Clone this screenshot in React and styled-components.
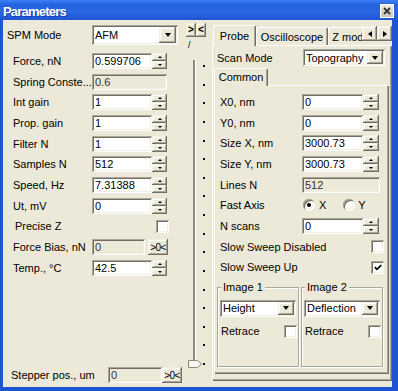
import React from "react";
import styled, { createGlobalStyle, css } from "styled-components";

const FACE = "#ECE9D8";
const LIGHT = "#F1EFE2";
const SHADOW = "#ACA899";
const DARK = "#716F64";
const BLUE = "#1D55D4";

const GlobalStyle = createGlobalStyle`
  html, body { margin: 0; padding: 0; background: ${FACE}; }
  body { font-family: "Liberation Sans", Arial, sans-serif; font-size: 11px; color: #000; }
  *, *::before, *::after { box-sizing: border-box; }
`;

const raised = css`
  background: ${FACE};
  box-shadow: inset -1px -1px 0 ${DARK}, inset 1px 1px 0 ${LIGHT},
    inset -2px -2px 0 ${SHADOW}, inset 2px 2px 0 #fff;
`;
const sunken = css`
  box-shadow: inset 1px 1px 0 ${SHADOW}, inset -1px -1px 0 #fff,
    inset 2px 2px 0 ${DARK}, inset -2px -2px 0 ${LIGHT};
`;

const Window = styled.div`
  width: 398px;
  height: 391px;
  display: flex;
  flex-direction: column;
  background: ${FACE};
  overflow: hidden;
`;
const TitleBar = styled.div`
  height: 20px;
  flex: none;
  display: flex;
  align-items: center;
  justify-content: space-between;
  padding: 0 4px 0 3px;
  background: linear-gradient(180deg, #3d80f2 0%, #2462e0 25%, #2a66e2 60%, #1d55d4 100%);
`;
const Title = styled.span`
  color: #fff;
  font-weight: bold;
  font-size: 13px;
  letter-spacing: -0.8px;
  padding-top: 2px;
  text-shadow: 1px 1px 0 rgba(10, 30, 110, 0.55);
`;
const CloseButton = styled.div`
  width: 14px;
  height: 14px;
  margin-top: 2px;
  margin-right: 0;
  border: 1px solid #fff;
  background: linear-gradient(#eceae4, #c8c5bc);
  display: flex;
  align-items: center;
  justify-content: center;
`;
const Frame = styled.div`
  flex: 1;
  min-height: 0;
  display: flex;
  border-style: solid;
  border-color: ${BLUE};
  border-width: 0 6px 4px 3px;
`;

/* ---------- generic controls ---------- */
const Row = styled.div`
  display: flex;
  align-items: center;
  flex: none;
  height: ${(p) => p.$h ?? 20.7}px;
  margin-top: ${(p) => p.$mt ?? 0}px;
`;
const LabelCell = styled.div`
  width: ${(p) => p.$w}px;
  padding-left: ${(p) => p.$indent}px;
  flex: none;
  white-space: nowrap;
  overflow: hidden;
`;
const TextField = styled.div`
  width: ${(p) => p.$w}px;
  height: ${(p) => p.$h ?? 16}px;
  flex: none;
  display: flex;
  align-items: center;
  padding: 0 3px;
  white-space: nowrap;
  overflow: hidden;
  color: ${(p) => (p.$readOnly ? "#333" : "#000")};
  ${sunken};
  background: ${(p) => (p.$readOnly ? FACE : "#fff")};
`;
const Spin = styled.div`
  width: ${(p) => p.$w ?? 15}px;
  height: 16px;
  flex: none;
  display: flex;
  flex-direction: column;
`;
const SpinBtn = styled.div`
  flex: 1;
  display: flex;
  align-items: center;
  justify-content: center;
  ${raised};
`;
const Arrow = styled.span`
  width: 0;
  height: 0;
  border-left: 2px solid transparent;
  border-right: 2px solid transparent;
  ${(p) => (p.$dir === "up" ? "border-bottom: 2px solid #000;" : "border-top: 2px solid #000;")}
`;
const Combo = styled.div`
  width: ${(p) => p.$w}px;
  height: ${(p) => p.$h}px;
  flex: none;
  display: flex;
  align-items: center;
  padding: 2px;
  ${sunken};
  background: #fff;
`;
const ComboText = styled.span`
  flex: 1;
  padding-left: 1px;
  white-space: nowrap;
  overflow: hidden;
`;
const DropBtn = styled.div`
  width: ${(p) => p.$w ?? 16}px;
  align-self: stretch;
  display: flex;
  align-items: center;
  justify-content: center;
  ${raised};
`;
const DownTri = styled.span`
  width: 0;
  height: 0;
  border-left: 3.5px solid transparent;
  border-right: 3.5px solid transparent;
  border-top: 4px solid #000;
`;
const CheckBox = styled.div`
  width: 13px;
  height: 13px;
  flex: none;
  display: flex;
  align-items: center;
  justify-content: center;
  margin-left: ${(p) => p.$ml ?? 0}px;
  ${sunken};
  background: #fff;
`;
const SmallButton = styled.div`
  width: 20px;
  height: 16px;
  flex: none;
  display: flex;
  align-items: center;
  justify-content: center;
  font-size: 10px;
  letter-spacing: -0.6px;
  margin-left: ${(p) => p.$ml ?? 0}px;
  ${raised};
`;
const Radio = styled.div`
  width: 12px;
  height: 12px;
  flex: none;
  border-radius: 50%;
  display: flex;
  align-items: center;
  justify-content: center;
  margin-left: ${(p) => p.$ml ?? 0}px;
  background: #fff;
  box-shadow: inset 1px 1px 0 ${SHADOW}, inset -1px -1px 0 #fff,
    inset 2px 2px 0 ${DARK}, inset -2px -2px 0 ${LIGHT};
`;
const RadioDot = styled.span`
  width: 4px;
  height: 4px;
  border-radius: 50%;
  background: #000;
`;
const RadioLabel = styled.span`
  margin-left: ${(p) => p.$ml}px;
`;
const Spacer = styled.div`
  flex: 1;
`;

/* ---------- left panel ---------- */
const LeftPanel = styled.div`
  width: 183px;
  flex: none;
  display: flex;
  flex-direction: column;
  padding: 5px 0 4px;
`;

/* ---------- middle splitter / trackbar ---------- */
const Middle = styled.div`
  width: 26px;
  flex: none;
  display: flex;
  flex-direction: column;
  padding-top: 3px;
`;
const SplitButtons = styled.div`
  display: flex;
  height: 14px;
`;
const SplitBtn = styled.div`
  width: 10px;
  height: 14px;
  display: flex;
  align-items: center;
  justify-content: center;
  font-size: 10px;
  font-weight: bold;
  line-height: 1;
  ${raised};
`;
const Slash = styled.div`
  height: 10px;
  margin-top: 3px;
  padding-left: 2px;
  font-size: 9px;
  line-height: 10px;
`;
const Track = styled.div`
  position: relative;
  display: flex;
  height: 311px;
  margin-top: 8px;
`;
const Groove = styled.div`
  width: 3px;
  flex: none;
  margin: 2px 0 7px 7px;
  border-left: 2px solid #8b887c;
  border-right: 1px solid #fff;
`;
const TickCol = styled.div`
  width: 2px;
  flex: none;
  margin-left: 7px;
  padding: 7px 0 4px;
  display: flex;
  flex-direction: column;
  justify-content: space-between;
`;
const Tick = styled.div`
  width: 2px;
  height: 2px;
  flex: none;
  background: #111;
`;
const Thumb = styled.svg`
  position: absolute;
  left: 2px;
  top: 302px;
`;

/* ---------- tabs ---------- */
const TabControl = styled.div`
  display: flex;
  flex-direction: column;
  width: ${(p) => p.$w};
  min-width: 0;
  flex: ${(p) => p.$flex ?? "none"};
  margin-bottom: ${(p) => p.$mb ?? 0}px;
`;
const TabStrip = styled.div`
  height: ${(p) => p.$h}px;
  flex: none;
  display: flex;
  align-items: flex-end;
`;
const TabsScroller = styled.div`
  flex: 1;
  min-width: 0;
  display: flex;
  align-items: flex-end;
  align-self: stretch;
  overflow-x: clip;
  overflow-y: visible;
  padding-left: ${(p) => p.$pl ?? 0}px;
`;
const Tab = styled.div`
  flex: none;
  width: ${(p) => p.$w}px;
  height: ${(p) => p.$h}px;
  margin-bottom: ${(p) => (p.$active ? -1 : 0)}px;
  position: relative;
  z-index: ${(p) => (p.$active ? 1 : 0)};
  background: ${FACE};
  border-top: 1px solid #fff;
  border-left: 1px solid #fff;
  border-right: 1px solid ${DARK};
  box-shadow: inset -1px 0 0 ${SHADOW};
  border-top-left-radius: 2px;
  border-top-right-radius: 2px;
  display: flex;
  align-items: center;
  justify-content: center;
  padding-bottom: ${(p) => (p.$active ? 1 : 0)}px;
  white-space: nowrap;
  overflow: hidden;
`;
const ScrollArrows = styled.div`
  display: flex;
  flex: none;
  align-self: flex-start;
  margin-top: 6px;
`;
const ScrollBtn = styled.div`
  width: 15px;
  height: 15px;
  display: flex;
  align-items: center;
  justify-content: center;
  ${raised};
`;
const SideTri = styled.span`
  width: 0;
  height: 0;
  border-top: 3.5px solid transparent;
  border-bottom: 3.5px solid transparent;
  ${(p) => (p.$dir === "left" ? "border-right: 4px solid #000;" : "border-left: 4px solid #000;")}
`;
const TabPanel = styled.div`
  flex: 1;
  display: flex;
  flex-direction: column;
  background: ${FACE};
  padding: ${(p) => p.$pad};
  box-shadow: inset 1px 1px 0 #fff, inset -1px -1px 0 ${DARK}, inset -2px -2px 0 ${SHADOW};
`;

/* ---------- groups ---------- */
const GroupsRow = styled.div`
  display: flex;
  gap: 2px;
  margin-top: 3px;
  padding-left: 3px;
`;
const Group = styled.div`
  position: relative;
  width: 82px;
  height: 86px;
  padding-top: 6px;
`;
const GroupCaption = styled.span`
  position: absolute;
  top: 0;
  left: 4px;
  padding: 0 2px;
  line-height: 12px;
  background: ${FACE};
`;
const GroupFrame = styled.div`
  height: 80px;
  display: flex;
  flex-direction: column;
  padding: 12px 1px 0 2px;
  border: 1px solid ${SHADOW};
  box-shadow: inset 1px 1px 0 #fff, 1px 1px 0 #fff;
`;
const GroupRow = styled.div`
  display: flex;
  align-items: center;
  height: 13px;
  margin-top: 8px;
  padding-left: 1px;
`;

/* ---------- data ---------- */
const leftRows = [
  { label: "Force, nN", kind: "spin", value: "0.599706" },
  { label: "Spring Conste...", kind: "ro", value: "0.6" },
  { label: "Int gain", kind: "spin", value: "1" },
  { label: "Prop. gain", kind: "spin", value: "1" },
  { label: "Filter N", kind: "spin", value: "1" },
  { label: "Samples N", kind: "spin", value: "512" },
  { label: "Speed, Hz", kind: "spin", value: "7.31388" },
  { label: "Ut, mV", kind: "spin", value: "0" },
  { label: "Precise Z", kind: "check", indent: 12 },
  { label: "Force Bias, nN", kind: "bias", value: "0" },
  { label: "Temp., \u00B0C", kind: "spin", value: "42.5" },
];

const SpinField = ({ value, w, sw }) => (
  <>
    <TextField $w={w}>{value}</TextField>
    <Spin $w={sw}>
      <SpinBtn>
        <Arrow $dir="up" />
      </SpinBtn>
      <SpinBtn>
        <Arrow $dir="down" />
      </SpinBtn>
    </Spin>
  </>
);

const ComboBox = ({ w, h, text, bw }) => (
  <Combo $w={w} $h={h}>
    <ComboText>{text}</ComboText>
    <DropBtn $w={bw}>
      <DownTri />
    </DropBtn>
  </Combo>
);

const Check = () => (
  <svg width="8" height="7" viewBox="0 0 8 7">
    <polyline points="0.8,3.2 3,5.4 7.2,1.2" fill="none" stroke="#000" strokeWidth="1.7" />
  </svg>
);

const ImageGroup = ({ caption, value }) => (
  <Group>
    <GroupCaption>{caption}</GroupCaption>
    <GroupFrame>
      <ComboBox w={76} h={17} text={value} bw={16} />
      <GroupRow>
        <span>Retrace</span>
        <Spacer />
        <CheckBox />
      </GroupRow>
    </GroupFrame>
  </Group>
);

export default function App() {
  const ticks = Array.from({ length: 17 });
  return (
    <>
      <GlobalStyle />
      <Window>
        <TitleBar>
          <Title>Parameters</Title>
          <CloseButton>
            <svg width="8" height="8" viewBox="0 0 8 8">
              <path d="M1 1 L7 7 M7 1 L1 7" stroke="#333" strokeWidth="1.8" />
            </svg>
          </CloseButton>
        </TitleBar>
        <Frame>
          <LeftPanel>
            <Row $h={20}>
              <LabelCell $w={89} $indent={4}>
                SPM Mode
              </LabelCell>
              <ComboBox w={86} h={20} text="AFM" bw={17} />
            </Row>
            {leftRows.map((r, i) => (
              <Row key={r.label} $mt={i === 0 ? 5.6 : 0}>
                <LabelCell $w={89} $indent={r.indent ?? 10}>
                  {r.label}
                </LabelCell>
                {r.kind === "spin" && <SpinField value={r.value} w={60} sw={15} />}
                {r.kind === "ro" && (
                  <TextField $w={75} $readOnly>
                    {r.value}
                  </TextField>
                )}
                {r.kind === "check" && <CheckBox $ml={64} />}
                {r.kind === "bias" && (
                  <>
                    <TextField $w={53} $readOnly>
                      {r.value}
                    </TextField>
                    <SmallButton $ml={3}>&gt;0&lt;</SmallButton>
                  </>
                )}
              </Row>
            ))}
            <Spacer />
            <Row $h={16}>
              <LabelCell $w={105} $indent={8}>
                Stepper pos., um
              </LabelCell>
              <TextField $w={54} $readOnly>
                0
              </TextField>
              <SmallButton>&gt;0&lt;</SmallButton>
            </Row>
          </LeftPanel>

          <Middle>
            <SplitButtons>
              <SplitBtn>&gt;</SplitBtn>
              <SplitBtn>&lt;</SplitBtn>
            </SplitButtons>
            <Slash>/</Slash>
            <Track>
              <Groove />
              <TickCol>
                {ticks.map((_, i) => (
                  <Tick key={i} />
                ))}
              </TickCol>
              <Thumb width="14" height="8" viewBox="0 0 14 8">
                <path d="M0.5 0.5 H9.5 L13.5 4 L9.5 7.5 H0.5 Z" fill="#f6f5f0" stroke="#8a877b" />
              </Thumb>
            </Track>
          </Middle>

          <TabControl $w="180px" $mb={6}>
            <TabStrip $h={25}>
              <TabsScroller $pl={1}>
                <Tab $w={43} $h={21} $active>
                  Probe
                </Tab>
                <Tab $w={72} $h={18}>
                  Oscilloscope
                </Tab>
                <Tab $w={72} $h={18}>
                  Z modulation
                </Tab>
              </TabsScroller>
              <ScrollArrows>
                <ScrollBtn>
                  <SideTri $dir="left" />
                </ScrollBtn>
                <ScrollBtn>
                  <SideTri $dir="right" />
                </ScrollBtn>
              </ScrollArrows>
            </TabStrip>
            <TabPanel $pad="3px 3px 7px 2px">
              <Row $h={19}>
                <LabelCell $w={89} $indent={3}>
                  Scan Mode
                </LabelCell>
                <ComboBox w={82} h={17} text="Topography" bw={16} />
              </Row>
              <TabControl $flex="1">
                <TabStrip $h={18}>
                  <TabsScroller>
                    <Tab $w={54} $h={18} $active>
                      Common
                    </Tab>
                  </TabsScroller>
                </TabStrip>
                <TabPanel $pad="6.65px 6px 7px 0">
                  <Row>
                    <LabelCell $w={88} $indent={6}>X0, nm</LabelCell>
                    <SpinField value="0" w={61} sw={16} />
                  </Row>
                  <Row>
                    <LabelCell $w={88} $indent={6}>Y0, nm</LabelCell>
                    <SpinField value="0" w={61} sw={16} />
                  </Row>
                  <Row>
                    <LabelCell $w={88} $indent={6}>Size X, nm</LabelCell>
                    <SpinField value="3000.73" w={61} sw={16} />
                  </Row>
                  <Row>
                    <LabelCell $w={88} $indent={6}>Size Y, nm</LabelCell>
                    <SpinField value="3000.73" w={61} sw={16} />
                  </Row>
                  <Row>
                    <LabelCell $w={88} $indent={6}>Lines N</LabelCell>
                    <TextField $w={78} $readOnly>
                      512
                    </TextField>
                  </Row>
                  <Row>
                    <LabelCell $w={88} $indent={6}>Fast Axis</LabelCell>
                    <Radio $ml={1}>
                      <RadioDot />
                    </Radio>
                    <RadioLabel $ml={4}>X</RadioLabel>
                    <Radio $ml={17} />
                    <RadioLabel $ml={3}>Y</RadioLabel>
                  </Row>
                  <Row>
                    <LabelCell $w={88} $indent={6}>N scans</LabelCell>
                    <SpinField value="0" w={61} sw={16} />
                  </Row>
                  <Row>
                    <LabelCell $w={157} $indent={6}>Slow Sweep Disabled</LabelCell>
                    <CheckBox />
                  </Row>
                  <Row>
                    <LabelCell $w={157} $indent={6}>Slow Sweep Up</LabelCell>
                    <CheckBox>
                      <Check />
                    </CheckBox>
                  </Row>
                  <GroupsRow>
                    <ImageGroup caption="Image 1" value="Height" />
                    <ImageGroup caption="Image 2" value="Deflection" />
                  </GroupsRow>
                </TabPanel>
              </TabControl>
            </TabPanel>
          </TabControl>
        </Frame>
      </Window>
    </>
  );
}
